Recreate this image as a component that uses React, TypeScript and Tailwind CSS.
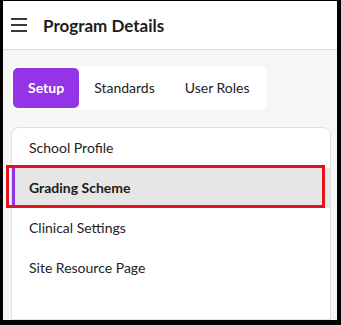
import { useState } from 'react';

const MENU = ['School Profile', 'Grading Scheme', 'Clinical Settings', 'Site Resource Page'];
const TABS = ['Setup', 'Standards', 'User Roles'];

export default function App() {
  const [tab, setTab] = useState('Setup');
  const [active, setActive] = useState('Grading Scheme');

  return (
    <div className="w-[341px] h-[325px] bg-black pl-[3px] pr-[4px] pt-[1px] pb-[5px] overflow-hidden" style={{ fontFamily: 'Lato, "Open Sans", sans-serif' }}>
      <div className="h-full bg-[#f6f6f6] flex flex-col overflow-hidden">
        {/* Header */}
        <div className="h-[49px] shrink-0 bg-white border-b border-[#dcdcdc] flex items-center pl-[8px]">
          <button className="w-[16px] flex flex-col gap-[4.5px]">
            <span className="h-[1.5px] bg-[#3a3a3a]" />
            <span className="h-[1.5px] bg-[#3a3a3a]" />
            <span className="h-[1.5px] bg-[#3a3a3a]" />
          </button>
          <h1 className="ml-[16px] mt-[2px] text-[17px] font-bold text-[#1c1c1c]">Program Details</h1>
        </div>

        {/* Tabs */}
        <div className="pl-[8px] pt-[16px]">
          <div className="inline-flex bg-white rounded-[6px] p-[2px]">
            {TABS.map((t) => (
              <button
                key={t}
                onClick={() => setTab(t)}
                className={
                  tab === t
                    ? 'h-[40px] px-[15px] pb-[1px] rounded-[5px] bg-[#9434e6] text-white font-bold text-[14px]'
                    : 'h-[40px] px-[15px] pb-[1px] rounded-[5px] text-[#222] text-[14px]'
                }
              >
                {t}
              </button>
            ))}
          </div>
        </div>

        {/* Menu card */}
        <div className="mt-[17px] ml-[8px] mr-[6px] flex-1 bg-white border border-[#e0e0e0] rounded-t-[8px]">
          {MENU.map((m) => (
            <div
              key={m}
              onClick={() => setActive(m)}
              className={
                active === m
                  ? 'relative h-[40px] flex items-center pl-[14px] pb-[2px] bg-[#e6e6e6] border-l-[3px] border-[#9434e6] text-[14px] font-bold text-[#1c1c1c]'
                  : 'relative h-[40px] flex items-center pl-[14px] pb-[2px] border-l-[3px] border-transparent text-[14px] text-[#222]'
              }
            >
              {m}
              {active === m && (
                <div className="absolute left-[-9px] right-[5px] top-[-3px] bottom-0 border-[3px] border-[#e3131c] pointer-events-none" />
              )}
            </div>
          ))}
        </div>
      </div>
    </div>
  );
}
